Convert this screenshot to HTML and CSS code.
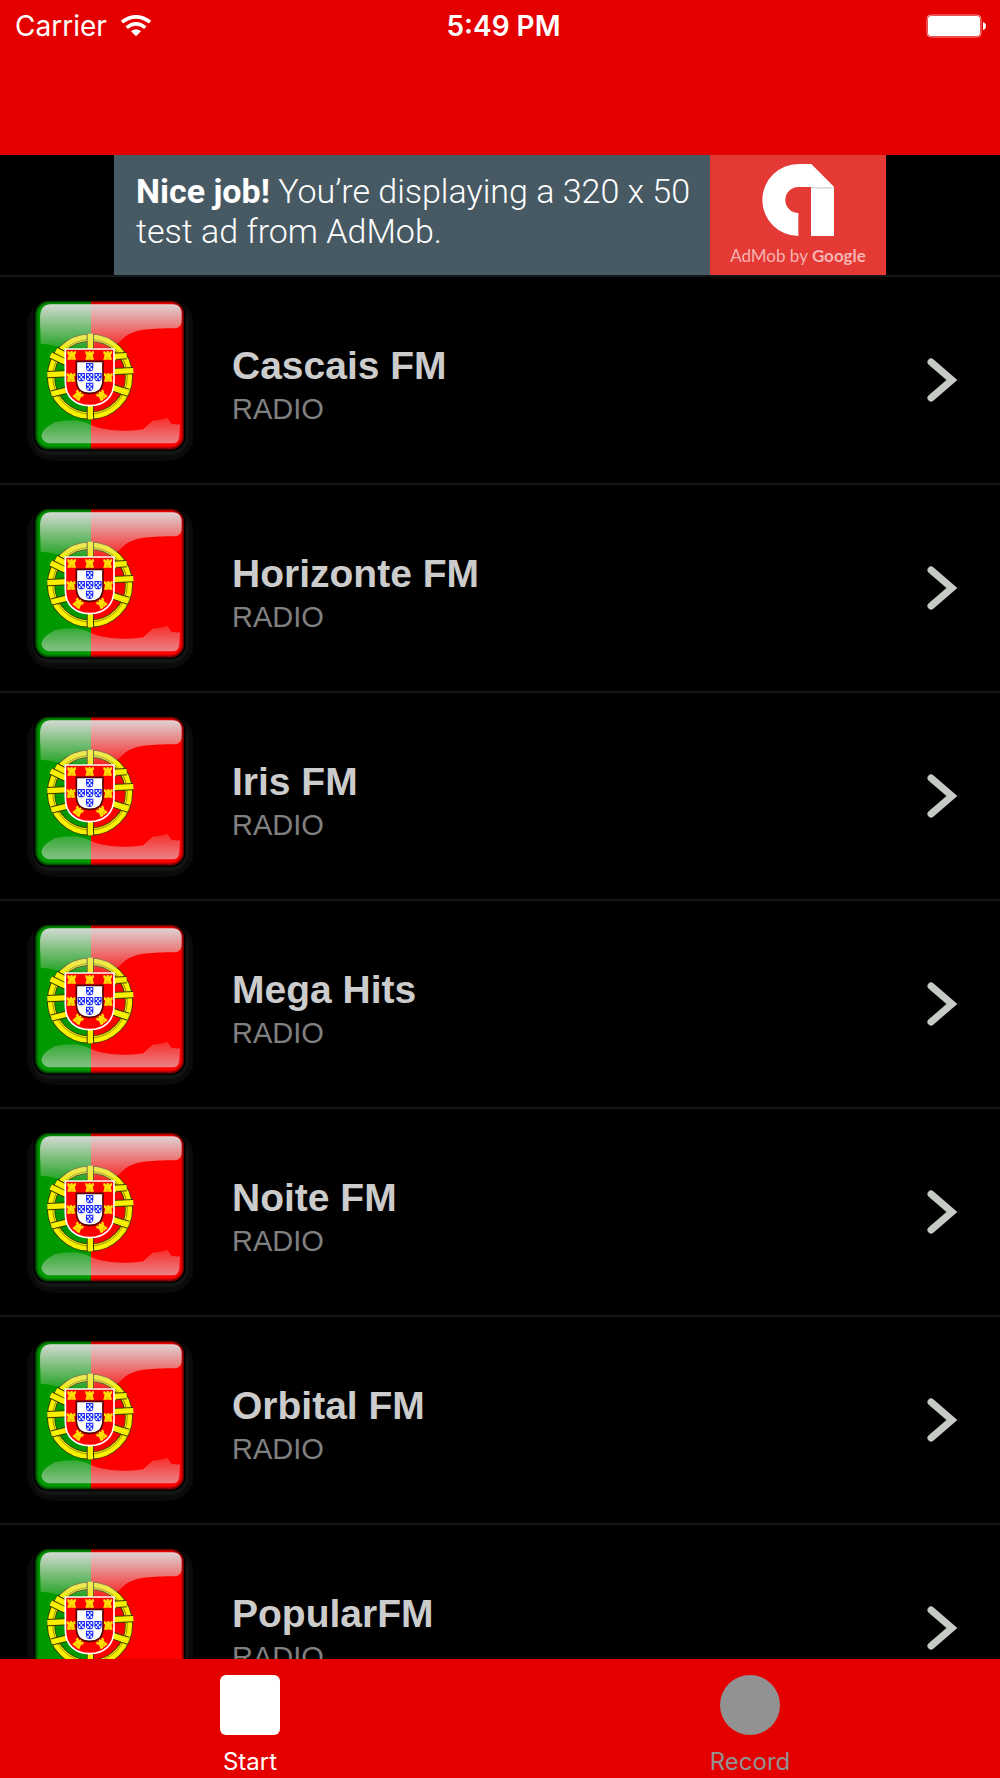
FILE: index.html
```html
<!DOCTYPE html>
<html lang="en">

<head>
    <meta charset="UTF-8">
    <meta name="viewport" content="width=device-width, initial-scale=1.0">
    <title>Radio</title>
    <link rel="stylesheet" href="styles.css">
</head>

<body>
    <!-- shared drawings -->
    <svg class="sprite" aria-hidden="true">
        <defs>
            <linearGradient id="shine-top" x1="0" y1="0" x2="0" y2="1">
                <stop offset="0" stop-color="#ddd" stop-opacity=".95" />
                <stop offset="1" stop-color="#ddd" stop-opacity=".15" />
            </linearGradient>
            <linearGradient id="shine-bottom" x1="0" y1="0" x2="0" y2="1">
                <stop offset="0" stop-color="#ddd" stop-opacity=".2" />
                <stop offset="1" stop-color="#ddd" stop-opacity=".6" />
            </linearGradient>
            <filter id="soft" x="-20%" y="-20%" width="140%" height="140%">
                <feGaussianBlur stdDeviation="12" />
            </filter>
            <filter id="edge" x="-10%" y="-10%" width="120%" height="120%">
                <feGaussianBlur stdDeviation="3" />
            </filter>
            <clipPath id="tile">
                <rect x="46" y="48" width="446" height="445" rx="40" />
            </clipPath>
            <g id="castle">
                <path d="M-13-12h6v3h4v-4h6v4h4v-3h6v8h-3v6l3 11h-26l3-11v-6h-3z" fill="#ffe000" />
                <path d="M-9 5H9" stroke="#f0b400" stroke-width="2" />
                <path d="M-2 13V10a2 2 0 0 1 4 0v3z" fill="#f09000" />
            </g>
            <g id="quina">
                <path d="M-11-12h22V2Q11 13 0 13T-11 2z" fill="#2030ff" />
                <g fill="#fff">
                    <circle cx="-5" cy="-6" r="3" />
                    <circle cx="5" cy="-6" r="3" />
                    <circle r="3" />
                    <circle cx="-5" cy="6" r="3" />
                    <circle cx="5" cy="6" r="3" />
                </g>
            </g>
            <g id="bands" fill="none">
                <path d="M211 146V403" />
                <path d="M82 269L340 257" />
                <path d="M92 210L140 233Q250 300 325 325" />
                <path d="M94 327L140 316Q250 260 286 214L320 212" />
                <path d="M108 196L150 218" />
                <path d="M270 306L325 322" />
            </g>
        </defs>
        <symbol id="flag" viewBox="0 0 570 570">
            <rect x="30" y="52" width="482" height="466" rx="60" fill="#181818" filter="url(#soft)" />
            <rect x="40" y="43" width="457" height="455" rx="44" fill="#000" />
            <g clip-path="url(#tile)">
                <path d="M43 46h170v450H43z" fill="#090" />
                <path d="M213 46h282v450H213z" fill="#f00" />
                <rect x="44" y="46" width="450" height="449" rx="42" fill="none" stroke="#000" stroke-opacity=".75" stroke-width="12" filter="url(#edge)" />
            </g>
            <circle cx="210" cy="275" r="117" fill="none" stroke="#3d3a00" stroke-width="24" />
            <circle cx="210" cy="275" r="117" fill="none" stroke="#f8f000" stroke-width="19" />
            <circle cx="210" cy="275" r="112" fill="none" stroke="#6d6800" stroke-width="2" />
            <use href="#bands" stroke="#3d3a00" stroke-width="22" />
            <use href="#bands" stroke="#f8f000" stroke-width="16" />
            <path d="M136 192H282V290C282 338 250 362 209 362S136 338 136 290z" fill="#f00" stroke="#fff" stroke-width="5" />
            <path d="M169 229H249V285Q249 325 209 325T169 285z" fill="#fff" stroke="#500" stroke-width="5" />
            <use href="#castle" x="155" y="211" />
            <use href="#castle" x="209" y="211" />
            <use href="#castle" x="263" y="211" />
            <use href="#castle" x="153" y="277" />
            <use href="#castle" x="265" y="277" />
            <use href="#castle" transform="translate(175 331) rotate(38)" />
            <use href="#castle" transform="translate(245 331) rotate(-38)" />
            <use href="#quina" x="209" y="246" />
            <use href="#quina" x="184" y="276" />
            <use href="#quina" x="209" y="276" />
            <use href="#quina" x="234" y="276" />
            <use href="#quina" x="209" y="305" />
            <path d="M62 177L60 100Q60 58 92 58H460Q484 60 485 85V112Q482 130 462 130C400 131 345 130 312 158C290 178 280 195 230 191C170 187 120 186 105 183Q80 176 62 177z" fill="url(#shine-top)" />
            <path d="M64 452Q66 432 104 412C145 402 185 403 214 420C245 436 325 442 370 433Q382 420 398 407Q425 404 442 398L454 416Q468 419 480 418L478 455Q474 475 460 475H90Q68 474 64 452z" fill="url(#shine-bottom)" />
        </symbol>
        <symbol id="chevron" viewBox="0 0 100 100">
            <path d="M31 32L52 50L31 68" fill="none" stroke="#c6cbc6" stroke-width="7" stroke-linecap="round" />
        </symbol>
    </svg>

    <header class="top-bar">
        <div class="status">
            <div class="carrier">
                <span>Carrier</span>
                <svg class="wifi" viewBox="0 0 90 66" role="img" aria-label="Wi-Fi">
                    <g fill="none" stroke="#fff" stroke-width="11">
                        <path d="M3 21Q45-10 87 21" />
                        <path d="M17 38Q45 15 73 38" />
                    </g>
                    <path d="M30 49Q45 37 60 49L45 64z" fill="#fff" />
                </svg>
            </div>
            <span class="time">5:49 PM</span>
            <svg class="battery" viewBox="0 0 60 24" role="img" aria-label="Battery">
                <rect x="1" y="1" width="54" height="22" rx="4" fill="none" stroke="#fff" stroke-opacity=".6" />
                <rect x="2" y="2" width="52" height="20" rx="3" fill="#fff" />
                <path d="M57 8q3 1 3 4t-3 4z" fill="#fff" />
            </svg>
        </div>
    </header>

    <main class="content">
        <a class="ad" href="#">
            <p class="ad-text"><b>Nice job!</b> You’re displaying a 320 x 50 test ad from AdMob.</p>
            <div class="ad-brand">
                <svg class="admob" viewBox="786 70 216 216" aria-hidden="true">
                    <path d="M895 286A108 108 0 0 1 895 70H934L1002 138V286H933V139H895A39 39 0 0 0 895 217z" fill="#fff" />
                    <path d="M934 139h66l2 5h-68z" fill="#ddd" />
                </svg>
                <span>AdMob by <b>Google</b></span>
            </div>
        </a>

        <ul class="stations">
            <li><a href="#">
                <svg class="flag"><use href="#flag" /></svg>
                <div class="info">
                    <h2>Cascais FM</h2>
                    <p>RADIO</p>
                </div>
                <svg class="chevron"><use href="#chevron" /></svg>
            </a></li>
            <li><a href="#">
                <svg class="flag"><use href="#flag" /></svg>
                <div class="info">
                    <h2>Horizonte FM</h2>
                    <p>RADIO</p>
                </div>
                <svg class="chevron"><use href="#chevron" /></svg>
            </a></li>
            <li><a href="#">
                <svg class="flag"><use href="#flag" /></svg>
                <div class="info">
                    <h2>Iris FM</h2>
                    <p>RADIO</p>
                </div>
                <svg class="chevron"><use href="#chevron" /></svg>
            </a></li>
            <li><a href="#">
                <svg class="flag"><use href="#flag" /></svg>
                <div class="info">
                    <h2>Mega Hits</h2>
                    <p>RADIO</p>
                </div>
                <svg class="chevron"><use href="#chevron" /></svg>
            </a></li>
            <li><a href="#">
                <svg class="flag"><use href="#flag" /></svg>
                <div class="info">
                    <h2>Noite FM</h2>
                    <p>RADIO</p>
                </div>
                <svg class="chevron"><use href="#chevron" /></svg>
            </a></li>
            <li><a href="#">
                <svg class="flag"><use href="#flag" /></svg>
                <div class="info">
                    <h2>Orbital FM</h2>
                    <p>RADIO</p>
                </div>
                <svg class="chevron"><use href="#chevron" /></svg>
            </a></li>
            <li><a href="#">
                <svg class="flag"><use href="#flag" /></svg>
                <div class="info">
                    <h2>PopularFM</h2>
                    <p>RADIO</p>
                </div>
                <svg class="chevron"><use href="#chevron" /></svg>
            </a></li>
        </ul>
    </main>

    <nav class="tabs">
        <button class="tab active" type="button"><span class="square"></span>Start</button>
        <button class="tab" type="button"><span class="circle"></span>Record</button>
    </nav>
</body>

</html>
```
FILE: styles.css
```css
/* Basic Style */
* {
    box-sizing: border-box;
}

body {
    display: flex;
    flex-direction: column;
    height: 100vh;
    margin: 0;
    background: #000;
    font-family: "Liberation Sans", Arial, sans-serif;
}

h2,
p,
ul {
    margin: 0;
    padding: 0;
}

a {
    color: inherit;
    text-decoration: none;
}

.sprite {
    position: absolute;
    width: 0;
    height: 0;
}

/* Top bar */
.top-bar {
    flex: none;
    padding: 8px 14px 111px 15px;
    background: #e50000;
}

.status {
    display: grid;
    grid-template-columns: 1fr auto 1fr;
    align-items: center;
    color: #fff;
    font-family: Inter, sans-serif;
    font-size: 28px;
    line-height: 36px;
}

.carrier {
    display: flex;
    align-items: center;
    gap: 14px;
}

.wifi {
    width: 30px;
    height: 22px;
}

.time {
    padding-left: 6px;
    font-weight: 600;
}

.battery {
    width: 60px;
    height: 24px;
    justify-self: end;
}

/* Ad banner */
.content {
    flex: 1;
    min-height: 0;
    overflow: hidden;
}

.ad {
    display: flex;
    width: 772px;
    max-width: 100%;
    height: 120px;
    margin: 0 auto;
    background: #475a64;
    color: #fff;
}

.ad-text {
    flex: 1;
    padding: 16px 0 0 22px;
    font-family: Roboto, sans-serif;
    font-size: 34px;
    font-weight: 300;
    line-height: 40px;
}

.ad-text b {
    font-weight: 700;
}

.ad-brand {
    display: flex;
    flex-direction: column;
    align-items: center;
    gap: 8px;
    width: 176px;
    padding-top: 9px;
    background: #e53935;
    color: #f6b3b1;
    font-family: Lato, sans-serif;
    font-size: 17px;
    line-height: 24px;
}

.admob {
    width: 72px;
    height: 72px;
}

/* Stations */
.stations {
    list-style: none;
}

.stations li {
    border-top: 2px solid #12161a;
}

.stations a {
    display: flex;
    align-items: center;
    padding: 8px 0 8px 20px;
}

.flag {
    flex: none;
    width: 190px;
    height: 190px;
}

.info {
    flex: 1;
    padding: 14px 0 0 22px;
}

.info h2 {
    color: #ccc;
    font-size: 39px;
    line-height: 44px;
}

.info p {
    color: #808080;
    font-size: 29px;
    line-height: 42px;
}

.chevron {
    flex: none;
    width: 100px;
    height: 100px;
}

/* Tab bar */
.tabs {
    display: flex;
    flex: none;
    background: #e50000;
}

.tab {
    display: flex;
    flex: 1;
    flex-direction: column;
    align-items: center;
    gap: 13px;
    padding: 16px 0 2px;
    border: 0;
    background: none;
    color: #929292;
    font-family: Inter, sans-serif;
    font-size: 24px;
    line-height: 28px;
    cursor: pointer;
}

.tab.active {
    color: #fff;
}

.square,
.circle {
    width: 60px;
    height: 60px;
    background: currentColor;
}

.square {
    border-radius: 6px;
}

.circle {
    border-radius: 50%;
}
```
